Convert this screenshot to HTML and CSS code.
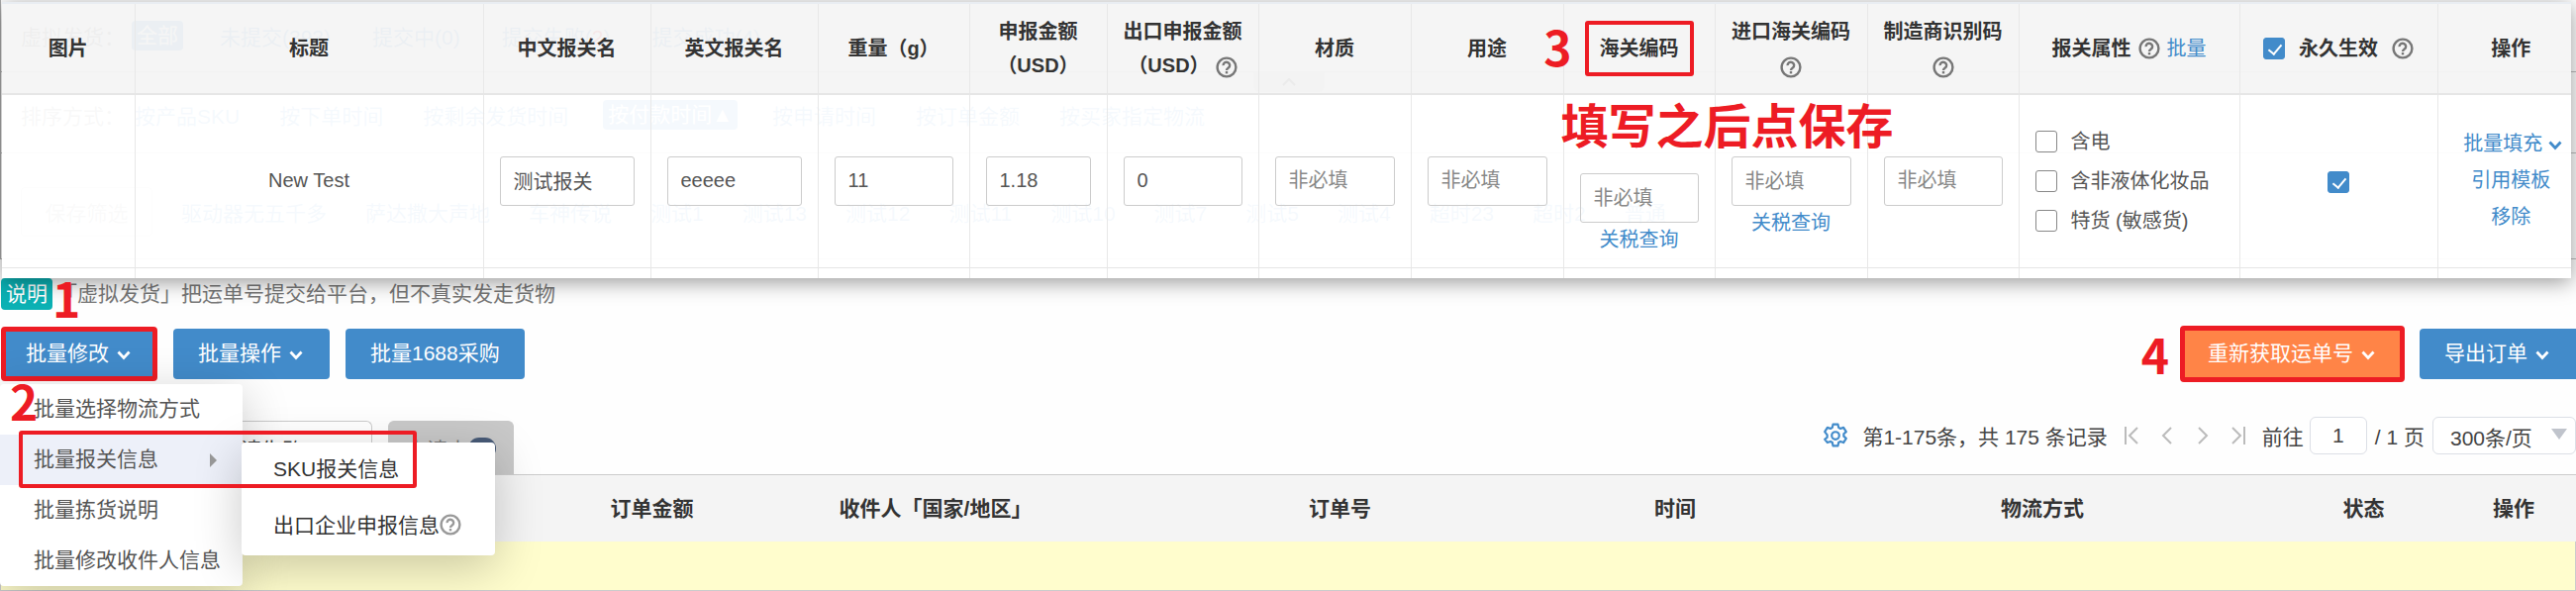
FILE: index.html
```html
<!DOCTYPE html>
<html lang="zh-CN">
    <head>
        <meta charset="utf-8">
        <title>批量报关信息</title>
        <link rel="stylesheet" href="styles.css">
    </head>

    <body>
        <svg class="sprite" aria-hidden="true">
            <symbol id="icon-help" viewBox="0 0 22 22">
                <circle cx="11" cy="11" r="9.4" fill="none" stroke="currentColor" stroke-width="2.4"/>
                <path d="M7.6 9.200a3.300 3.200 0 1 1 5.200 2.400c-1.200.8-1.800 1.200-1.800 2.400" fill="none" stroke="currentColor" stroke-width="2.4"/>
                <rect x="9.800" y="15" width="2.400" height="2.400" fill="currentColor"/>
            </symbol>
            <symbol id="icon-down" viewBox="0 0 14 10">
                <path d="M1.500 1.500 7 7.500l5.500-6" fill="none" stroke="currentColor" stroke-width="2.8"/>
            </symbol>
            <symbol id="icon-gear" viewBox="0 0 24 24">
                <path d="M9.700 1.500h4.600l.6 3 1.700 1 2.900-1 2.500 3.900-2.300 2v2.200l2.300 2-2.500 3.900-2.900-1-1.700 1-.6 3H9.700l-.6-3-1.700-1-2.900 1L2 15.600l2.300-2v-2.200L2 8.400l2.500-3.900 2.900 1 1.700-1z" fill="none" stroke="currentColor" stroke-width="2" stroke-linejoin="round"/>
                <circle cx="12" cy="12" r="3.500" fill="none" stroke="currentColor" stroke-width="2"/>
            </symbol>
        </svg>

        <main class="page">
            <section class="filters">
                <div class="filter-row filter-row--status">
                    <span>虚拟发货：</span>
                    <a href="#" class="is-active">全部</a>
                    <a href="#">未提交(393)</a>
                    <a href="#">提交中(0)</a>
                    <a href="#">提交失败(<em>2</em>)</a>
                    <a href="#">提交成功(4)</a>
                </div>
                <div class="filter-row filter-row--sort">
                    <span>排序方式：</span>
                    <a href="#">按产品SKU</a>
                    <a href="#">按下单时间</a>
                    <a href="#">按剩余发货时间</a>
                    <a href="#" class="is-active">按付款时间▲</a>
                    <a href="#">按申请时间</a>
                    <a href="#">按订单金额</a>
                    <a href="#">按买家指定物流</a>
                    <button class="filter-fold" aria-label="收起"><svg viewBox="0 0 14 8"><path d="M1 7l6-6 6 6" fill="none" stroke="currentColor" stroke-width="2"/></svg></button>
                </div>
                <div class="filter-row filter-row--saved">
                    <button class="filter-save">保存筛选</button>
                    <a href="#">驱动器无五千多</a>
                    <a href="#">萨达撒大声地</a>
                    <a href="#">车神传说</a>
                    <a href="#">测试1</a>
                    <a href="#">测试13</a>
                    <a href="#">测试12</a>
                    <a href="#">测试11</a>
                    <a href="#">测试10</a>
                    <a href="#">测试7</a>
                    <a href="#">测试5</a>
                    <a href="#">测试4</a>
                    <a href="#">超时23</a>
                    <a href="#">超时2</a>
                    <a href="#">普通</a>
                </div>
            </section>

            <div class="note">
                <span class="note-tag">说明</span>
                <span>「虚拟发货」把运单号提交给平台，但不真实发走货物</span>
                <b class="mark mark--1">1</b>
            </div>

            <div class="toolbar">
                <div class="menu-wrap">
                    <button class="btn marked">批量修改<svg class="chev"><use href="#icon-down"/></svg></button>
                    <ul class="menu">
                        <li><a href="#">批量选择物流方式</a></li>
                        <li class="is-open">
                            <a href="#">批量报关信息</a>
                            <ul class="submenu">
                                <li><a href="#">SKU报关信息</a></li>
                                <li><a href="#">出口企业申报信息<svg class="help help--light"><use href="#icon-help"/></svg></a></li>
                            </ul>
                            <span class="menu-frame"></span>
                        </li>
                        <li><a href="#">批量拣货说明</a></li>
                        <li><a href="#">批量修改收件人信息</a></li>
                    </ul>
                    <b class="mark mark--2">2</b>
                </div>
                <button class="btn">批量操作<svg class="chev"><use href="#icon-down"/></svg></button>
                <button class="btn">批量1688采购</button>
                <div class="toolbar-right">
                    <b class="mark mark--4">4</b>
                    <button class="btn btn--orange marked">重新获取运单号<svg class="chev"><use href="#icon-down"/></svg></button>
                    <button class="btn btn--last">导出订单<svg class="chev"><use href="#icon-down"/></svg></button>
                </div>
            </div>

            <div class="tabbar">
                <button class="tab tab--fail">申请失败</button>
                <button class="tab tab--current">申请中<span class="tab-count"></span></button>
                <div class="pager">
                    <svg class="gear"><use href="#icon-gear"/></svg>
                    <span class="pager-total">第1-175条，共 175 条记录</span>
                    <button class="pager-btn" aria-label="首页"><svg viewBox="0 0 14 18"><path d="M1 0v18M13 1 5 9l8 8"/></svg></button>
                    <button class="pager-btn" aria-label="上一页"><svg viewBox="0 0 14 18"><path d="M11 1 3 9l8 8"/></svg></button>
                    <button class="pager-btn" aria-label="下一页"><svg viewBox="0 0 14 18"><path d="M3 1l8 8-8 8"/></svg></button>
                    <button class="pager-btn" aria-label="末页"><svg viewBox="0 0 14 18"><path d="M13 0v18M1 1l8 8-8 8"/></svg></button>
                    <label for="page-no">前往</label>
                    <input type="text" id="page-no" class="pager-input" value="1">
                    <span class="pager-pages">/ 1 页</span>
                    <div class="pager-size">
                        <select aria-label="每页条数"><option>300条/页</option></select>
                    </div>
                </div>
            </div>

            <table class="orders">
                <colgroup>
                    <col class="o-blank"><col class="o-amount"><col class="o-buyer"><col class="o-no"><col class="o-time"><col class="o-ship"><col class="o-state"><col class="o-op">
                </colgroup>
                <thead>
                    <tr>
                        <th></th>
                        <th>订单金额</th>
                        <th>收件人「国家/地区」</th>
                        <th>订单号</th>
                        <th>时间</th>
                        <th>物流方式</th>
                        <th>状态</th>
                        <th>操作</th>
                    </tr>
                </thead>
                <tbody>
                    <tr><td colspan="8"></td></tr>
                </tbody>
            </table>

            <section class="dialog">
                <table class="customs">
                    <colgroup>
                        <col class="c-img"><col class="c-title"><col class="c-name"><col class="c-name"><col class="c-mid"><col class="c-usd"><col class="c-mid"><col class="c-wide"><col class="c-wide"><col class="c-mid"><col class="c-wide"><col class="c-mid"><col class="c-attr"><col class="c-keep"><col class="c-op">
                    </colgroup>
                    <thead>
                        <tr>
                            <th>图片</th>
                            <th>标题</th>
                            <th>中文报关名</th>
                            <th>英文报关名</th>
                            <th>重量（g）</th>
                            <th>申报金额<br>（USD）</th>
                            <th>出口申报金额<br>（USD）<svg class="help help--gap"><use href="#icon-help"/></svg></th>
                            <th>材质</th>
                            <th>用途</th>
                            <th><span class="hs-title">海关编码<b class="mark mark--3">3</b><b class="mark mark--tip">填写之后点保存</b></span></th>
                            <th>进口海关编码<br><svg class="help"><use href="#icon-help"/></svg></th>
                            <th>制造商识别码<br><svg class="help"><use href="#icon-help"/></svg></th>
                            <th>
                                <div class="th-line">报关属性<svg class="help"><use href="#icon-help"/></svg><a href="#">批量</a></div>
                            </th>
                            <th>
                                <div class="th-line th-line--keep"><input type="checkbox" id="keep-all" checked><label for="keep-all">永久生效</label><svg class="help"><use href="#icon-help"/></svg></div>
                            </th>
                            <th>操作</th>
                        </tr>
                    </thead>
                    <tbody>
                        <tr>
                            <td></td>
                            <td>New Test</td>
                            <td><input type="text" aria-label="中文报关名" value="测试报关"></td>
                            <td><input type="text" aria-label="英文报关名" value="eeeee"></td>
                            <td><input type="text" aria-label="重量" value="11"></td>
                            <td><input type="text" aria-label="申报金额" value="1.18"></td>
                            <td><input type="text" aria-label="出口申报金额" value="0"></td>
                            <td><input type="text" aria-label="材质" placeholder="非必填"></td>
                            <td><input type="text" aria-label="用途" placeholder="非必填"></td>
                            <td class="cell-hs"><input type="text" aria-label="海关编码" placeholder="非必填"><a href="#">关税查询</a></td>
                            <td class="cell-import"><input type="text" aria-label="进口海关编码" placeholder="非必填"><a href="#">关税查询</a></td>
                            <td><input type="text" aria-label="制造商识别码" placeholder="非必填"></td>
                            <td>
                                <div class="checks">
                                    <label><input type="checkbox">含电</label>
                                    <label><input type="checkbox">含非液体化妆品</label>
                                    <label><input type="checkbox">特货 (敏感货)</label>
                                </div>
                            </td>
                            <td><input type="checkbox" aria-label="永久生效" checked></td>
                            <td>
                                <div class="ops">
                                    <a href="#">批量填充<svg class="chev"><use href="#icon-down"/></svg></a>
                                    <a href="#">引用模板</a>
                                    <a href="#">移除</a>
                                </div>
                            </td>
                        </tr>
                        <tr class="row-next">
                            <td></td><td></td><td></td><td></td><td></td><td></td><td></td><td></td><td></td><td></td><td></td><td></td><td></td><td></td><td></td>
                        </tr>
                    </tbody>
                </table>
            </section>
        </main>
    </body>

</html>
```

FILE: styles.css
```css
* {
    box-sizing: border-box;
}
html, body {
    margin: 0;
    background: #fefefe;
    font-family: "Liberation Sans", "Noto Sans CJK SC", sans-serif;
    font-size: 21px;
    color: #444;
}
body {
    overflow: hidden;
}
a {
    color: #428bca;
    text-decoration: none;
}
ul {
    list-style: none;
    margin: 0;
    padding: 0;
}
button, input, select {
    font: inherit;
    color: inherit;
}
table {
    border-collapse: collapse;
    table-layout: fixed;
}
.sprite {
    display: none;
}
.help {
    width: 22px;
    height: 22px;
    color: #777;
    vertical-align: middle;
}
.help--light {
    color: #999;
}
.help--gap {
    margin-left: 6px;
}
.chev {
    width: 14px;
    height: 10px;
    margin: 0 2px 0 8px;
}
.page {
    position: relative;
}

/* filters under the dialog */
.filters {
    height: 262px;
    margin-bottom: 19px;
    border-left: 1px solid #aaa;
}
.filter-row {
    display: flex;
    align-items: center;
    gap: 42px;
    padding-left: 20px;
    border-bottom: 1px solid #bbb;
    white-space: nowrap;
}
.filter-row > span {
    margin-right: -30px;
    color: #777;
}
.filter-row .is-active {
    margin: 0 -5px;
    padding: 0 5px;
    line-height: 30px;
    border-radius: 4px;
    background: #428bca;
    color: #fff;
}
.filter-row em {
    font-style: normal;
    color: #f00;
}
.filter-row--status {
    height: 73px;
}
.filter-row--sort {
    height: 82px;
    padding-top: 4px;
    gap: 40px;
    position: relative;
}
.filter-row--saved {
    height: 107px;
    padding-top: 12px;
    gap: 39px;
}
.filter-save {
    width: 133px;
    height: 50px;
    margin-right: -10px;
    border: 1px solid #ccc;
    border-radius: 4px;
    background: #fff;
    color: #999;
}
.filter-fold {
    position: absolute;
    left: 1265px;
    top: 0;
    width: 72px;
    height: 20px;
    padding: 0;
    border: 0;
    border-radius: 0 0 6px 6px;
    background: #ccc;
}
.filter-fold svg {
    display: block;
    width: 14px;
    height: 8px;
    margin: 0 auto;
}

.note {
    position: relative;
    display: flex;
    gap: 4px;
    padding-left: 1px;
    line-height: 32px;
    color: #777;
}
.note-tag {
    padding: 0 5px;
    border-radius: 4px;
    background: #0bb1b4;
    color: #fff;
    line-height: 32px;
}

.toolbar {
    display: flex;
    gap: 16px;
    padding: 19px 0 0 1px;
}
.toolbar-right {
    position: relative;
    display: flex;
    gap: 18px;
    margin-left: auto;
}
.btn {
    position: relative;
    height: 51px;
    padding: 0 25px 5px;
    border: 0;
    border-radius: 4px;
    background: #428bca;
    color: #fff;
    white-space: nowrap;
}
.btn--orange {
    background: #ff8447;
}
.btn--last {
    border-radius: 4px 0 0 4px;
}
.marked::after {
    content: "";
    position: absolute;
    inset: -2px 0;
    border: 5px solid #ed1c24;
    border-radius: 4px;
}
.btn--orange::after {
    inset: -3px;
}

/* hand-placed step marks */
.mark {
    position: absolute;
    z-index: 30;
    color: #ed1c24;
    font: bold 48px/48px "Noto Sans CJK SC", sans-serif;
    white-space: nowrap;
}
.mark--1 {
    left: 53px;
    top: -5px;
}
.mark--2 {
    left: 9px;
    top: 48px;
}
.mark--3 {
    right: 108px;
    top: -10px;
}
.mark--4 {
    right: 411px;
    top: 1px;
}
.mark--tip {
    left: -39px;
    top: 68px;
}

.menu-wrap {
    position: relative;
}
.menu {
    position: absolute;
    z-index: 10;
    left: -1px;
    top: 56px;
    width: 245px;
    background: #fff;
    border-radius: 4px;
    box-shadow: 0 12px 48px rgba(0, 0, 0, .22);
    color: #555;
    white-space: nowrap;
}
.menu a {
    display: block;
    padding: 0 0 2px 34px;
    line-height: 49px;
    color: inherit;
}
.is-open {
    position: relative;
    background: #edf0f9;
}
.is-open::before {
    content: "";
    position: absolute;
    left: 212px;
    top: 19px;
    border: solid transparent;
    border-width: 7px 0 7px 7px;
    border-left-color: #999;
}
.submenu {
    position: absolute;
    left: 244px;
    top: 8px;
    width: 256px;
    background: #fff;
    border-radius: 4px;
    box-shadow: 0 12px 48px rgba(0, 0, 0, .22);
    color: #333;
}
.submenu a {
    padding: 0 0 4px 32px;
    line-height: 53px;
}
.submenu .help {
    margin: -4px 0 0;
}
.menu-frame {
    position: absolute;
    left: 19px;
    top: -4px;
    width: 402px;
    height: 58px;
    border: 4px solid #ed1c24;
    border-radius: 3px;
}

.tabbar {
    display: flex;
    align-items: flex-end;
    gap: 16px;
    padding: 42px 0 0 196px;
    border-bottom: 1px solid #ccc;
}
.tab {
    height: 54px;
    padding: 0 18px;
    border: 1px solid #ccc;
    border-bottom: 0;
    border-radius: 6px 6px 0 0;
    background: #fff;
    text-align: left;
    white-space: nowrap;
}
.tab--fail {
    width: 180px;
    padding-left: 25px;
}
.tab--current {
    display: flex;
    align-items: center;
    width: 127px;
    padding: 0 0 0 17px;
    border-color: #c9c9c9;
    background: #c9c9c9;
    color: #777;
}
.tab-count {
    width: 28px;
    height: 22px;
    border-radius: 11px;
    background: #485b78;
}
.pager {
    display: flex;
    align-items: center;
    align-self: flex-start;
    margin: -4px 0 0 auto;
    white-space: nowrap;
}
.gear {
    width: 26px;
    height: 26px;
    margin-right: 14px;
    color: #428bca;
}
.pager-total {
    margin-right: 6px;
}
.pager-btn {
    width: 36px;
    height: 26px;
    padding: 0;
    border: 0;
    background: none;
}
.pager-btn svg {
    display: block;
    width: 14px;
    height: 18px;
    margin: 0 auto;
    fill: none;
    stroke: #bbb;
    stroke-width: 2;
}
.pager label {
    margin: 0 6px;
}
.pager-input {
    width: 58px;
    height: 38px;
    padding: 0;
    border: 1px solid #dcdfe6;
    border-radius: 6px;
    background: #fff;
    text-align: center;
}
.pager-pages {
    margin: 0 8px;
}
.pager-size {
    position: relative;
}
.pager-size select {
    display: block;
    width: 145px;
    height: 38px;
    padding: 4px 0 0 17px;
    border: 1px solid #dcdfe6;
    border-radius: 6px;
    background: #fff;
    appearance: none;
}
.pager-size::after {
    content: "";
    position: absolute;
    right: 9px;
    top: 12px;
    border: solid transparent;
    border-width: 11px 8px 0;
    border-top-color: #c0c4cc;
}

.orders {
    width: 100%;
}
.orders th {
    height: 67px;
    padding: 0 0 3px;
    background: #f4f4f4;
    color: #333;
}
.orders td {
    height: 49px;
    background: #fffdcd;
    border: 1px solid #ccc;
    border-top: 0;
}
.o-blank { width: 577px; }
.o-amount { width: 162px; }
.o-buyer { width: 411px; }
.o-no { width: 406px; }
.o-time { width: 271px; }
.o-ship { width: 471px; }
.o-state { width: 178px; }

/* customs dialog */
.dialog {
    position: absolute;
    z-index: 20;
    left: 2px;
    right: 5px;
    top: 2px;
    overflow: hidden;
    background: rgba(255, 255, 255, .95);
    box-shadow: 0 4px 20px rgba(0, 0, 0, .4);
    font-size: 20px;
    color: #555;
}
.customs {
    width: 100%;
    border-top: 2px solid #e9edf2;
}
.customs th, .customs td {
    padding: 0 16px;
    border-left: 1px solid #e8e8e8;
    text-align: center;
}
.customs th:first-child, .customs td:first-child {
    border-left: 0;
}
.customs th {
    height: 92px;
    padding: 0;
    background: rgba(0, 0, 0, .04);
    border-bottom: 2px solid #e6e6e6;
    line-height: 34px;
    color: #333;
    white-space: nowrap;
}
.customs td {
    height: 175px;
    border-bottom: 1px solid #e6e6e6;
}
.customs .row-next td {
    height: 11px;
    border-bottom: 0;
}
.customs th:last-child, .customs td:last-child {
    padding: 0 0 0 13px;
}
.customs input[type="text"] {
    display: block;
    width: 100%;
    height: 50px;
    padding: 0 13px;
    border: 1px solid #ccc;
    border-radius: 3px;
    background: none;
}
.customs input::placeholder {
    color: #888;
    opacity: 1;
}
.customs .cell-hs, .customs .cell-import {
    padding-top: 62px;
    vertical-align: top;
    line-height: 34px;
}
.customs .cell-hs {
    padding-top: 79px;
}
.customs input[type="checkbox"] {
    appearance: none;
    width: 22px;
    height: 22px;
    margin: 0;
    border: 1px solid #888;
    border-radius: 3px;
    background: #fff;
    vertical-align: middle;
}
.customs input[type="checkbox"]:checked {
    position: relative;
    border-color: #428bca;
    background: #428bca;
}
.customs input[type="checkbox"]:checked::after {
    content: "";
    position: absolute;
    left: 7px;
    top: 3px;
    width: 6px;
    height: 11px;
    border: solid #fff;
    border-width: 0 2px 2px 0;
    transform: rotate(40deg);
}
.hs-title {
    position: relative;
    display: inline-block;
}
.hs-title::before {
    content: "";
    position: absolute;
    inset: -11px -15px;
    border: 4px solid #ed1c24;
    border-radius: 3px;
}
.th-line {
    display: flex;
    align-items: center;
    justify-content: center;
    gap: 7px;
}
.th-line a {
    font-weight: normal;
}
.th-line--keep {
    gap: 14px;
}
.checks {
    display: flex;
    flex-direction: column;
    line-height: 40px;
    text-align: left;
    white-space: nowrap;
}
.checks label {
    display: flex;
    align-items: center;
    gap: 14px;
}
.ops {
    display: flex;
    flex-direction: column;
    line-height: 37px;
    white-space: nowrap;
}
.ops .chev {
    margin: 0 -4px 0 6px;
}
.c-img { width: 134px; }
.c-title { width: 352px; }
.c-name { width: 169px; }
.c-mid { width: 153px; }
.c-wide { width: 154px; }
.c-usd { width: 139px; }
.c-attr { width: 223px; }
.c-keep { width: 200px; }
```
